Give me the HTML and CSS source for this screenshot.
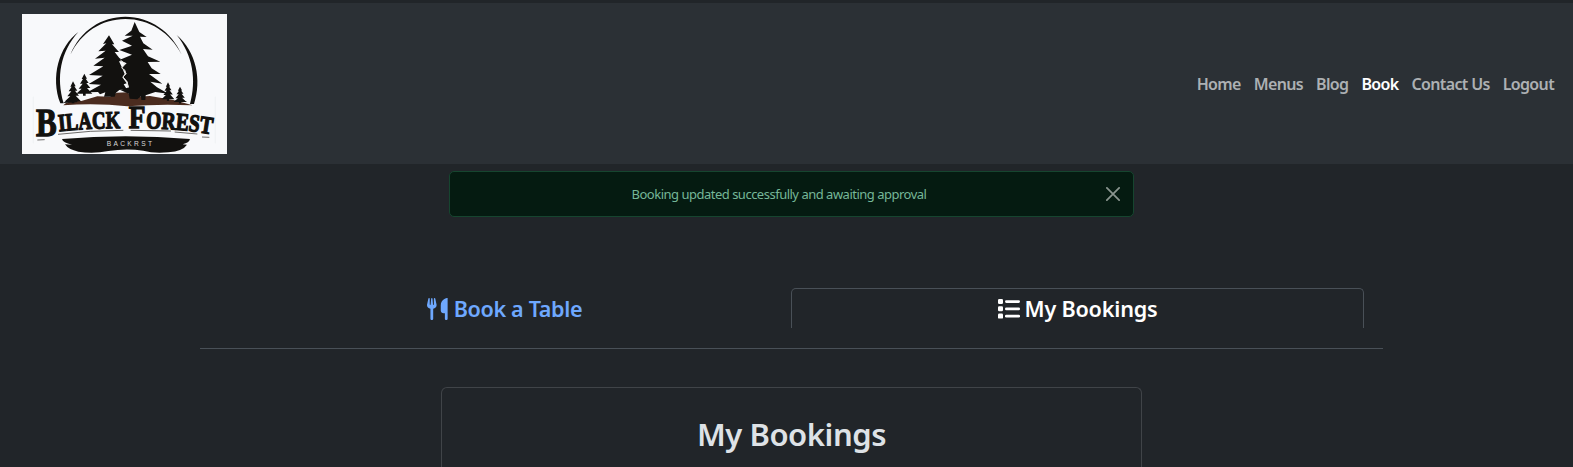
FILE: index.html
```html
<!DOCTYPE html>
<html lang="en">
<head>
<meta charset="utf-8">
<title>Black Forest - My Bookings</title>
<link rel="stylesheet" href="styles.css">
</head>
<body>
<header class="navbar">
  <a class="brand" href="#">
    <svg class="logo" viewBox="66 42 615 420" preserveAspectRatio="none" role="img" aria-label="Logo">
      <defs>
        <path id="name-left" d="M177 394 Q270 384 366 385"/>
        <path id="name-right" d="M438 385 Q540 386 642 404"/>
        <path id="small-tree" d="M0 0 L8 15 L4 15 L13 28 L6 28 L18 43 L8 43 L24 60 L4 60 L4 66 L-4 66 L-4 60 L-24 60 L-8 45 L-17 45 L-5 30 L-13 30 L-4 16 L-8 16 Z"/>
      </defs>
      <rect x="66" y="42" width="615" height="420" fill="#f8f9fb"/>
      <path d="M100 290 V430 M646 290 V430" fill="none" stroke="#eceef0" stroke-width="2"/>
      <g fill="#12110f">
        <path d="M211 164 C240 91 306 50 376 50 C450 50 515 95 545 164 C510 97 448 57 376 57 C304 57 244 98 211 164Z"/>
        <path d="M235 96 C176 140 151 232 181 310 L191 310 C168 232 181 156 235 96Z"/>
        <path d="M530 105 C589 155 606 240 582 312 L570 312 C590 241 579 166 530 105Z"/>
      </g>
      <path d="M190 316 Q198 302 244 303 L292 289 L330 290 L350 278 L382 277 L395 291 L450 288 L520 300 L578 316 Q480 311 382 319 Q290 309 190 316Z" fill="#4b2c1f"/>
      <g fill="#12110f">
        <path d="M327 106 L343 133 L336 133 L357 156 L344 156 L358 174 L372 183 L357 184 L368 207 L374 222 L367 232 L380 250 L371 253 L380 267 L358 270 L348 278 L344 290 L312 290 L316 277 L300 283 L294 276 L262 277 L303 254 L266 252 L308 227 L267 225 L310 199 L280 197 L314 173 L285 176 L317 152 L295 154 L319 130 L309 132 Z"/>
        <path d="M404 66 L418 96 L440 111 L420 110 L430 130 L458 149 L429 147 L444 169 L481 185 L443 186 L455 205 L482 222 L447 222 L487 251 L451 245 L471 262 L505 281 L466 276 L437 286 L436 300 L424 300 L423 289 L412 298 L389 296 L386 281 L361 270 L387 262 L381 244 L369 230 L380 221 L373 210 L365 204 L380 190 L358 180 L396 164 L358 150 L396 137 L366 122 L398 107 L374 107 L394 92 Z"/>
        <use href="#small-tree" transform="translate(219 244)"/>
        <use href="#small-tree" transform="translate(253 221)"/>
        <use href="#small-tree" transform="translate(504 247) scale(.8 .85)"/>
        <use href="#small-tree" transform="translate(540 260) scale(.8 .77)"/>
        <path d="M190 309 L211 292 L238 300 L230 307Z M525 302 L542 298 L562 306Z"/>
      </g>
      <path d="M361 180 L375 191 L365 204 L375 211 L377 222 L369 231 L382 246 L384 262" fill="none" stroke="#e7e5e2" stroke-width="3"/>
      <g class="logo-name">
        <text class="cap-b" x="108" y="409" textLength="62" lengthAdjust="spacingAndGlyphs">B</text>
        <text><textPath href="#name-left" textLength="184" lengthAdjust="spacingAndGlyphs">ILACK</textPath></text>
        <text class="cap-f" x="386" y="385" textLength="50" lengthAdjust="spacingAndGlyphs">F</text>
        <text><textPath href="#name-right" textLength="198" lengthAdjust="spacingAndGlyphs">OREST</textPath></text>
      </g>
      <path d="M174 403 Q270 391 370 391 M392 391 L513 393 M524 396 L592 402 M112 420 L134 419 M606 411 L628 412" fill="none" stroke="#24211e" stroke-width="2"/>
      <path d="M186 417 Q375 401 570 417 Q568 428 548 433 L561 434 Q549 453 505 457 Q460 461 430 452 Q378 444 325 453 Q280 462 235 455 Q205 449 195 433 L216 434 Q188 428 186 417Z" fill="#12110f"/>
      <text class="logo-sub" x="320" y="437" textLength="136">BACKRST</text>
    </svg>
  </a>
  <nav class="links">
    <a href="#">Home</a>
    <a href="#">Menus</a>
    <a href="#">Blog</a>
    <a class="active" href="#">Book</a>
    <a href="#">Contact Us</a>
    <a href="#">Logout</a>
  </nav>
</header>
<main>
  <div class="alert" role="alert">
    <span class="alert-text">Booking updated successfully and awaiting approval</span>
    <button class="close" aria-label="Close">
      <svg viewBox="0 0 16 16"><path d="M1 1 L15 15 M15 1 L1 15"/></svg>
    </button>
  </div>
  <div class="tabs">
    <a class="tab" href="#">
      <svg class="icon-utensils" viewBox="0 0 512 512"><path d="M64 16c0-8-6-15-14-16s-16 5-18 13L2 150c-1 5-2 9-2 14 0 46 35 83 80 87v229c0 18 14 32 32 32s32-14 32-32V251c45-4 80-41 80-87 0-5-1-9-2-14L192 13c-2-8-10-14-18-13s-14 8-14 16v134c0 6-4 10-10 10-5 0-9-4-10-9L128 15c-1-9-8-15-16-15s-15 6-16 15L84 151c-1 5-5 9-10 9-6 0-10-4-10-10V16ZM480 0c-32 0-160 32-160 176v112c0 35 29 64 64 64h32v128c0 18 14 32 32 32s32-14 32-32Z"/></svg>
      <span>Book a Table</span>
    </a>
    <a class="tab active" href="#">
      <svg class="icon-list" viewBox="0 0 22 20"><rect x="0" y="0" width="5" height="5" rx="1.2"/><rect x="0" y="7.3" width="5" height="5" rx="1.2"/><rect x="0" y="14.6" width="5" height="5" rx="1.2"/><rect x="7" y="1.2" width="15" height="2.7" rx="1.3"/><rect x="7" y="8.5" width="15" height="2.7" rx="1.3"/><rect x="7" y="15.8" width="15" height="2.7" rx="1.3"/></svg>
      <span>My Bookings</span>
    </a>
  </div>
  <section class="card">
    <h2>My Bookings</h2>
  </section>
</main>
</body>
</html>
```
FILE: styles.css
```css
* { box-sizing: border-box; }
html, body { height: 100%; }
body {
  display: flex;
  flex-direction: column;
  margin: 0;
  overflow: hidden;
  background: #212529;
  color: #dee2e6;
  font-family: "Noto Sans", "Open Sans", sans-serif;
}
a { text-decoration: none; }
.navbar {
  flex: none;
  display: flex;
  justify-content: space-between;
  align-items: center;
  height: 164px;
  padding: 0 19px 0 22px;
  border-top: 3px solid #212529;
  background: #2b3035;
}
.brand, .logo { display: block; }
.logo { width: 205px; height: 140px; }
.logo-name {
  fill: #12110f;
  stroke: #12110f;
  stroke-width: 4px;
  font: bold 73px "Liberation Serif", serif;
}
.cap-b { font-size: 118px; }
.cap-f { font-size: 93px; }
.logo-sub { fill: #d8d8d8; font: 20px "Liberation Sans", sans-serif; }
.links { display: flex; gap: 13px; font-size: 16px; font-weight: 600; line-height: 24px; letter-spacing: -.65px; white-space: nowrap; }
.links a { color: #adb0b3; }
.links a.active { color: #fff; }
main { flex: 1; min-height: 0; display: flex; flex-direction: column; }
.alert {
  flex: none;
  display: flex;
  align-items: center;
  width: 685px;
  height: 46px;
  margin: 7px 0 0 449px;
  padding: 0 13px 0 16px;
  border: 1px solid #16452f;
  border-radius: 5px;
  background: #051b11;
}
.alert-text { flex: 1; padding-right: 14px; text-align: center; color: #75b798; font-size: 13px; letter-spacing: -.5px; white-space: nowrap; }
.close { display: flex; padding: 0; border: 0; background: none; }
.close svg { width: 14px; height: 14px; fill: none; stroke: #8a958f; stroke-width: 2; stroke-linecap: round; }
.tabs {
  flex: none;
  display: flex;
  width: 1183px;
  height: 132px;
  margin-left: 200px;
  padding: 71px 19px 20px 18px;
  border-bottom: 1px solid #495057;
}
.tab {
  flex: 1;
  display: flex;
  justify-content: center;
  align-items: center;
  gap: 5px;
  height: 40px;
  border: 1px solid transparent;
  border-bottom: 0;
  border-radius: 5px 5px 0 0;
  color: #6ea8fe;
  font-size: 21.6px;
  font-weight: 600;
  line-height: 28px;
  letter-spacing: -.35px;
  white-space: nowrap;
}
.tab.active { border-color: #495057; color: #fff; letter-spacing: -.2px; }
.tab svg { flex: none; fill: currentColor; }
.icon-utensils { width: 22px; height: 22px; }
.icon-list { width: 22px; height: 20px; }
.card {
  flex: 1;
  width: 701px;
  margin: 38px 0 0 441px;
  padding-top: 27px;
  border: 1px solid #404448;
  border-bottom: 0;
  border-radius: 6px 6px 0 0;
  text-align: center;
}
.card h2 { margin: 0; font-size: 31px; font-weight: 600; line-height: 38px; letter-spacing: -.45px; }
```
